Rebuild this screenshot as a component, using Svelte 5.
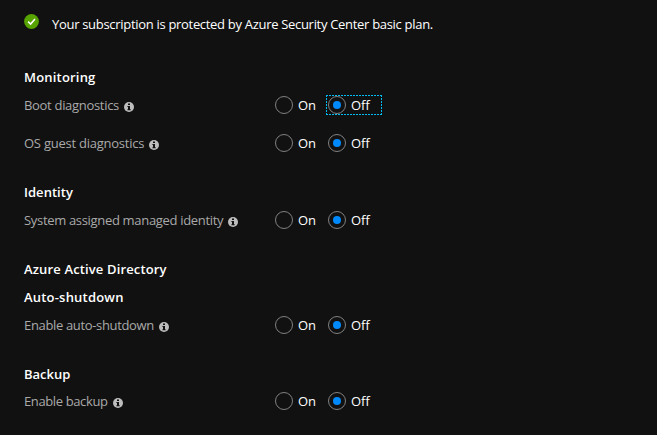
<script>
  const sections = [
    { title: 'Monitoring', ls: 0.19, gap: 0, rows: [
      { label: 'Boot diagnostics', ls: -0.31, focus: true },
      { label: 'OS guest diagnostics', ls: -0.24, gap: 10 }
    ] },
    { title: 'Identity', ls: 0.03, gap: 21, rows: [{ label: 'System assigned managed identity', ls: -0.32 }] },
    { title: 'Azure Active Directory', ls: 0.14, gap: 21, rows: [] },
    { title: 'Auto-shutdown', ls: 0.2, gap: 0, rows: [{ label: 'Enable auto-shutdown', ls: -0.34 }] },
    { title: 'Backup', ls: 0, gap: 21, rows: [{ label: 'Enable backup', ls: -0.38, h: 26 }] }
  ];
</script>

<main>
  <div class="notice">
    <svg width="15" height="15" viewBox="0 0 15 15"><circle cx="7.5" cy="7.5" r="7.4" fill="#57a300" /><path d="M4.1 7.6 6.6 10 11 4.9" fill="none" stroke="#fff" stroke-width="1.6" /></svg>
    <span>Your subscription is protected by Azure Security Center basic plan.</span>
  </div>
  {#each sections as s}
    <section style:margin-top="{s.gap}px">
      <h2><span style:letter-spacing="{s.ls}px">{s.title}</span></h2>
      {#each s.rows as r}
        <div class="row" style:margin-top="{r.gap ?? 0}px" style:height="{r.h ?? 28}px">
          <div class="label">
            <span style:letter-spacing="{r.ls}px">{r.label}</span>
            <svg width="10" height="10" viewBox="0 0 10 10"><circle cx="5" cy="5" r="5" fill="#bdbdbd" /><path d="M4 1.6h2v1.4H4zM3.4 4H6v3.3h.7v1H3.4v-1H4V5h-.6z" fill="#111" /></svg>
          </div>
          <div class="option"><i></i><span>On</span></div>
          <div class="option off" class:focus={r.focus}><i class="checked"></i><span>Off</span></div>
        </div>
      {/each}
    </section>
  {/each}
</main>

<style>
  :global(body) { background: #111; }
  main { box-sizing: border-box; width: 657px; height: 435px; padding: 14px 24px 0; background: #111; color: #fff; font: 13px/20px 'Open Sans', 'Noto Sans', sans-serif; overflow: hidden; white-space: nowrap; }
  .notice { display: flex; height: 49px; letter-spacing: -0.305px; }
  .notice svg { margin-right: 13px; }
  h2 { display: flex; align-items: center; height: 28px; margin: 0; font-size: 13px; font-weight: 600; }
  .row { display: flex; align-items: center; }
  .label { display: flex; align-items: center; width: 250px; color: #a9a9a9; }
  .label svg { margin: 4px 0 0 5px; }
  .option { display: flex; align-items: center; box-sizing: border-box; width: 56px; height: 20px; border: 1px solid transparent; }
  .option.off { margin-left: -4px; padding-left: 1px; }
  .focus {
    --h: repeating-linear-gradient(90deg, #00bcf2 0 2px, transparent 2px 3px);
    --v: repeating-linear-gradient(180deg, #00bcf2 0 2px, transparent 2px 3px);
    background-image: var(--h), var(--h), var(--v), var(--v);
    background-position: 0 0, 0 100%, 0 0, 100% 0;
    background-size: 100% 1px, 100% 1px, 1px 100%, 1px 100%;
    background-repeat: no-repeat;
    background-origin: border-box;
  }
  i { position: relative; box-sizing: border-box; width: 18px; height: 18px; margin-right: 5px; border: 1px solid #808080; border-radius: 50%; }
  .checked::after { content: ''; position: absolute; inset: 4px; border-radius: 50%; background: #0089fa; }
</style>
